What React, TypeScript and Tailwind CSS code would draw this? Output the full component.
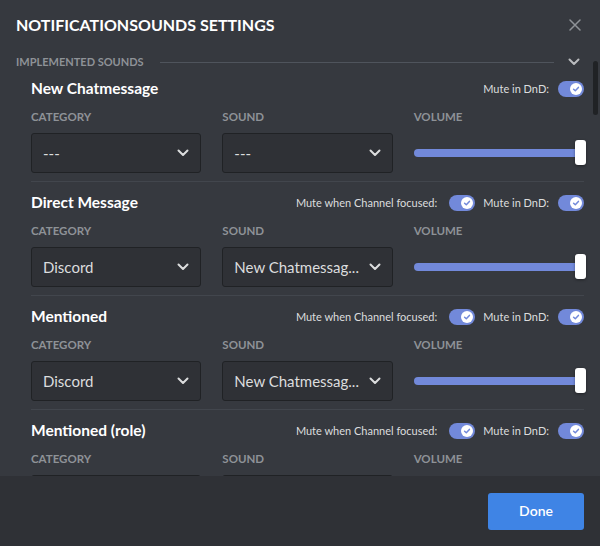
import React from 'react'

type Sound = {
  title: string
  category: string
  sound: string
  channelMute: boolean
}

const sounds: Sound[] = [
  { title: 'New Chatmessage', category: '---', sound: '---', channelMute: false },
  { title: 'Direct Message', category: 'Discord', sound: 'New Chatmessag...', channelMute: true },
  { title: 'Mentioned', category: 'Discord', sound: 'New Chatmessag...', channelMute: true },
  { title: 'Mentioned (role)', category: 'Discord', sound: 'New Chatmessag...', channelMute: true },
]

const Chevron = ({ className }: { className?: string }) => (
  <svg width="12" height="8" viewBox="0 0 12 8" className={className}>
    <path d="M1.5 1.5 L6 6 L10.5 1.5" fill="none" stroke="currentColor" strokeWidth="2" strokeLinecap="round" strokeLinejoin="round" />
  </svg>
)

const Toggle = () => (
  <div className="relative w-[26px] h-4 rounded-full bg-[#7289da]">
    <div className="absolute right-[2px] top-[2px] w-3 h-3 rounded-full bg-white flex items-center justify-center">
      <svg width="8" height="8" viewBox="0 0 8 8">
        <path d="M1.6 4.2 L3.3 5.8 L6.4 2.4" fill="none" stroke="#7289da" strokeWidth="1.5" strokeLinecap="round" strokeLinejoin="round" />
      </svg>
    </div>
  </div>
)

const Select = ({ value }: { value: string }) => (
  <div className="h-10 rounded-[3px] border border-[#202225] bg-[#2f3136] flex items-center justify-between pl-[11px] pr-[11px] text-[15px] text-[#dcddde]">
    <span className="truncate">{value}</span>
    <Chevron className="shrink-0 ml-1 text-[#dcddde]" />
  </div>
)

const Label = ({ children }: { children: React.ReactNode }) => (
  <div className="h-4 text-[11.5px] leading-4 font-bold uppercase text-[#8e9297]">{children}</div>
)

const Section = ({ s }: { s: Sound }) => (
  <div className="pl-[31px] pr-4">
    <div className="h-6 flex items-center justify-between">
      <h3 className="text-[15.5px] font-bold text-white">{s.title}</h3>
      <div className="flex items-center text-[11px] text-[#dcddde]">
        {s.channelMute && (
          <>
            <span>Mute when Channel focused:</span>
            <div className="ml-3 mr-2"><Toggle /></div>
          </>
        )}
        <span>Mute in DnD:</span>
        <div className="ml-[9px]"><Toggle /></div>
      </div>
    </div>
    <div className="mt-2 grid grid-cols-3 gap-x-[21px]">
      <div>
        <Label>Category</Label>
        <div className="mt-2"><Select value={s.category} /></div>
      </div>
      <div>
        <Label>Sound</Label>
        <div className="mt-2"><Select value={s.sound} /></div>
      </div>
      <div>
        <Label>Volume</Label>
        <div className="mt-2 h-10 relative flex items-center">
          <div className="h-2 flex-1 rounded-full bg-[#7289da]" />
          <div className="absolute right-[-2px] top-[7px] w-[11px] h-[25px] rounded-[3px] bg-white shadow-[0_1px_3px_rgba(0,0,0,0.4)]" />
        </div>
      </div>
    </div>
    <div className="mt-2 mb-[9px] h-px bg-[#42464d]" />
  </div>
)

export default function App() {
  return (
    <div className="w-[600px] h-[546px] bg-[#36393f] flex flex-col overflow-hidden font-['Lato','Noto_Sans',sans-serif]">
      <div className="h-[50px] shrink-0 flex items-center justify-between pl-4 pr-[19px]">
        <h2 className="text-base font-bold uppercase text-white">NotificationSounds Settings</h2>
        <svg width="12" height="12" viewBox="0 0 12 12">
          <path d="M1 1 L11 11 M11 1 L1 11" stroke="#8e9297" strokeWidth="1.5" strokeLinecap="round" />
        </svg>
      </div>
      <div className="relative flex-1 overflow-hidden">
        <div className="h-6 flex items-center pl-4 pr-5">
          <span className="text-[11px] font-bold uppercase text-[#8e9297]">Implemented Sounds</span>
          <div className="flex-1 h-px bg-[#4f545c] ml-4 mr-[14px]" />
          <Chevron className="text-[#b9bbbe]" />
        </div>
        <div className="mt-[3px]">
          {sounds.map((s) => (
            <Section key={s.title} s={s} />
          ))}
        </div>
        <div className="absolute right-[2px] top-[11px] w-[5px] h-[54px] rounded-full bg-[#202225]" />
      </div>
      <div className="h-[70px] shrink-0 bg-[#2f3136] flex items-center justify-end pr-4">
        <button className="w-24 h-[37px] rounded-[3px] bg-[#3f84e5] text-white text-sm font-semibold">Done</button>
      </div>
    </div>
  )
}
